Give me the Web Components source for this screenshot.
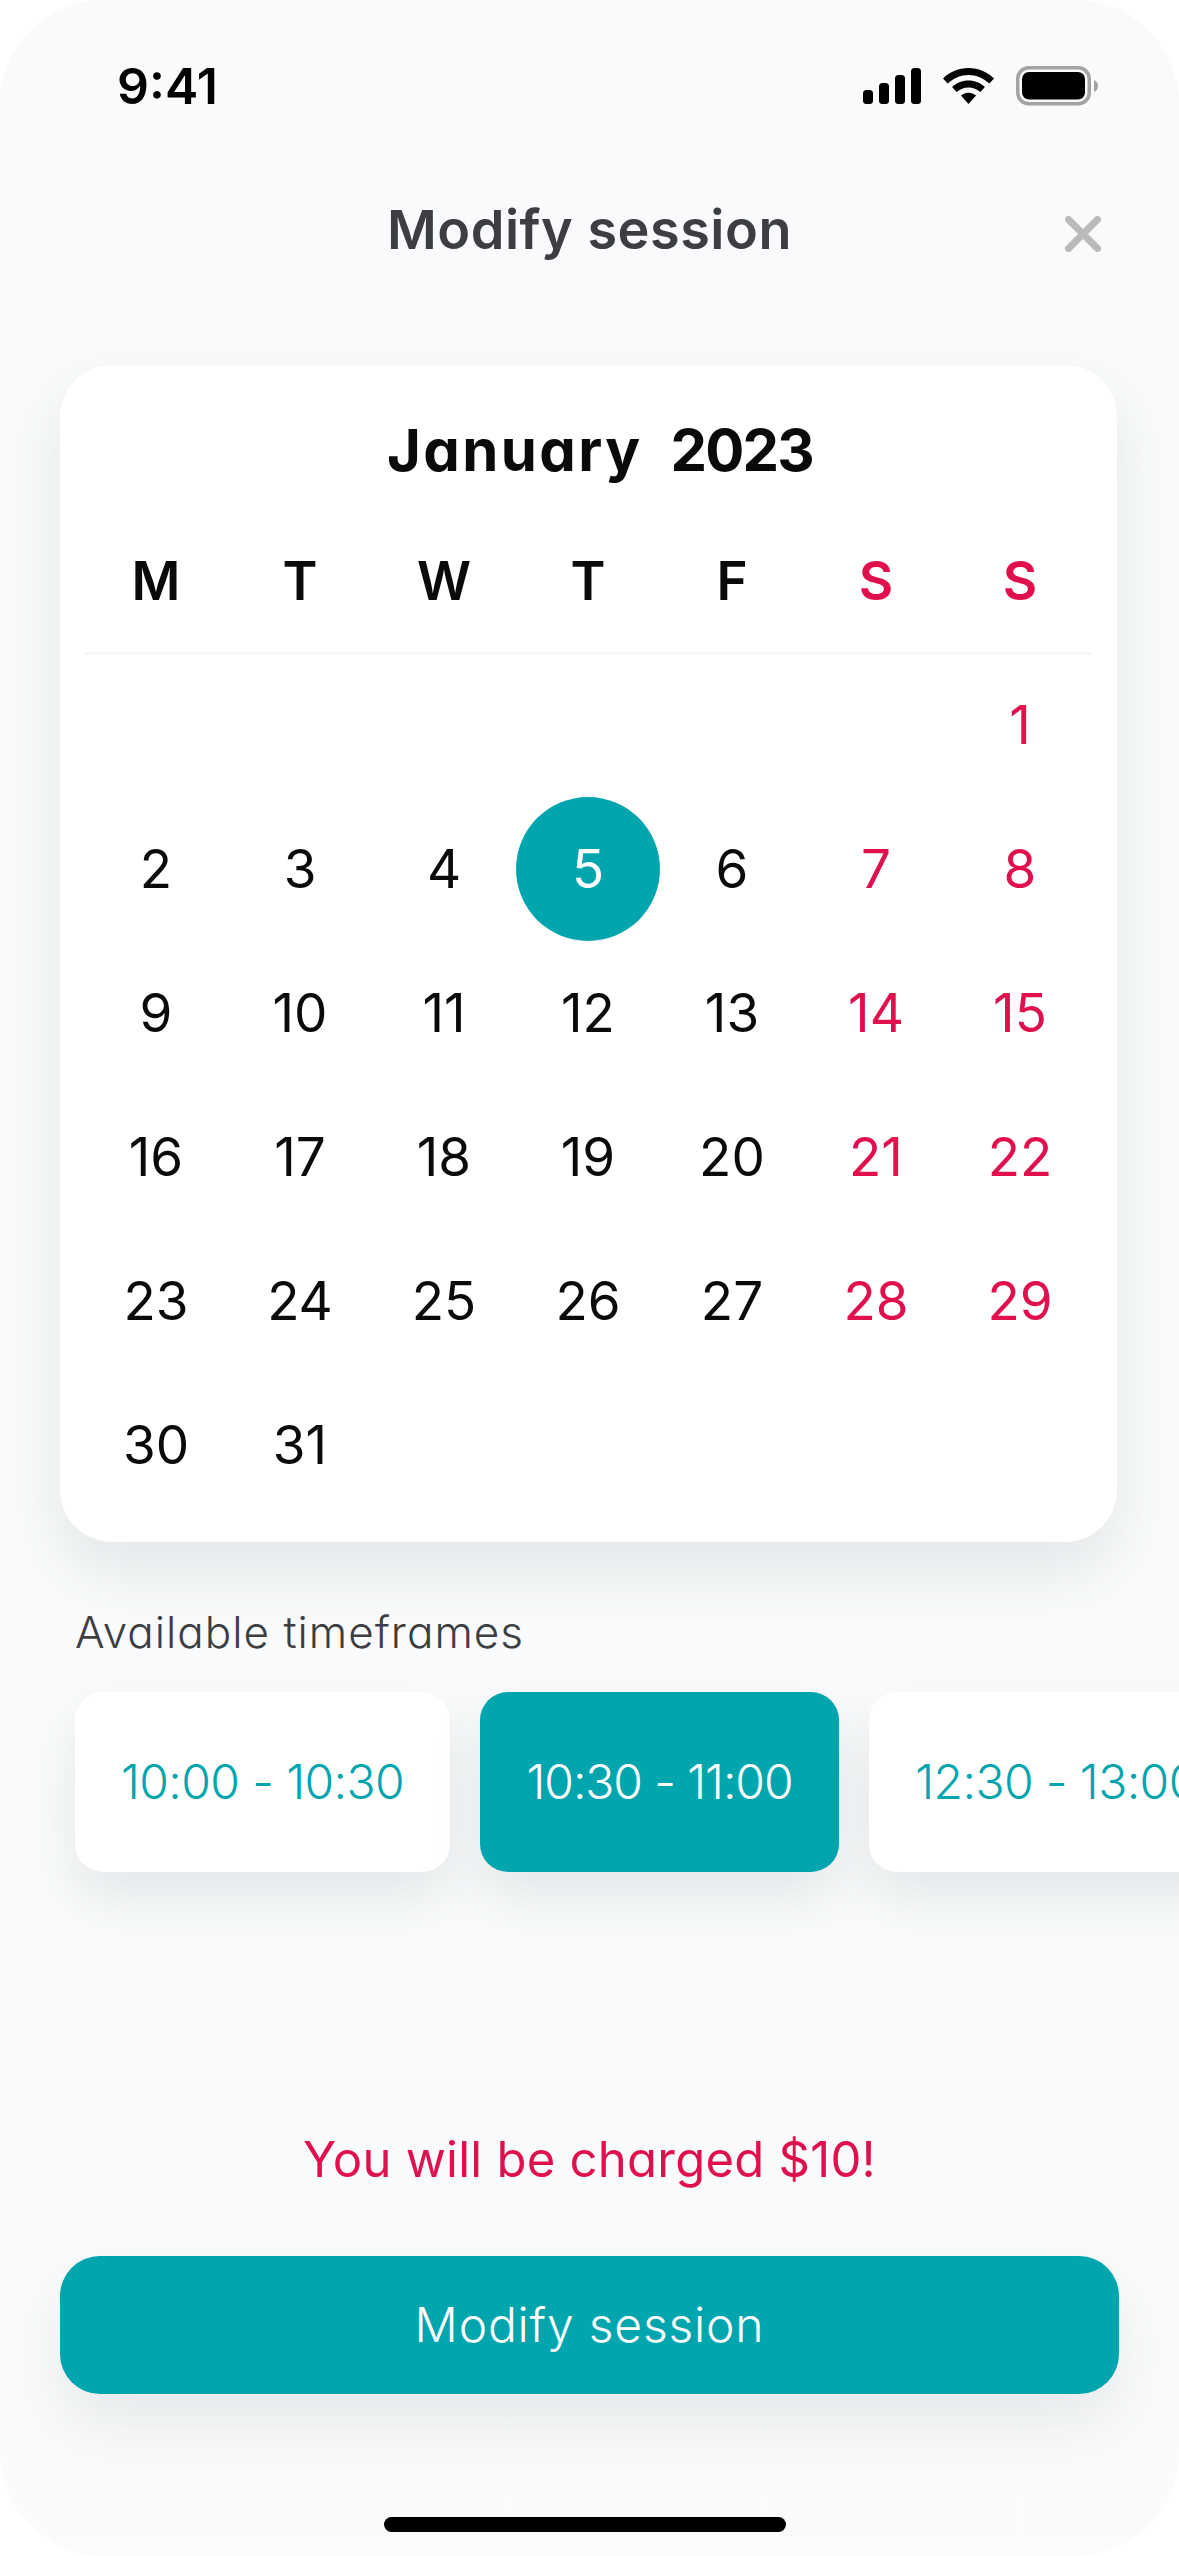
<!DOCTYPE html>
<html lang="en">
<head>
<meta charset="utf-8">
<title>Modify session</title>
<style>
    html, body { margin: 0; background: #fff; }
    body { font-family: "Inter", "Noto Sans", sans-serif; font-feature-settings: "cv11" 1; }
</style>
</head>
<body>
<app-screen>
    <status-bar></status-bar>
    <sheet-header>Modify session</sheet-header>
    <month-calendar month="January" year="2023" first="7" days="31" selected="5"></month-calendar>
    <time-picker label="Available timeframes">
        <time-chip>10:00 - 10:30</time-chip>
        <time-chip selected>10:30 - 11:00</time-chip>
        <time-chip>12:30 - 13:00</time-chip>
    </time-picker>
    <charge-note>You will be charged $10!</charge-note>
    <primary-button>Modify session</primary-button>
    <home-bar></home-bar>
</app-screen>

<script>
// Screen frame
class AppScreen extends HTMLElement {
    constructor() {
        super();
        this.attachShadow({ mode: 'open' });
        this.shadowRoot.innerHTML = `
            <style>
                :host {
                    display: flex;
                    flex-direction: column;
                    width: 1179px;
                    height: 2556px;
                    background: linear-gradient(#f8fafb, #fafbfc);
                    border-radius: 104px;
                    overflow: hidden;
                    --teal: #00a5ad;
                    --red: #e0104d;
                    --ink: #0a0a0a;
                    --slate: #3c3e42;
                }
            </style>
            <slot></slot>
        `;
    }
}
customElements.define('app-screen', AppScreen);

// Status bar
class StatusBar extends HTMLElement {
    constructor() {
        super();
        this.attachShadow({ mode: 'open' });
        this.shadowRoot.innerHTML = `
            <style>
                :host {
                    display: flex;
                    justify-content: space-between;
                    align-items: center;
                    height: 56px;
                    padding: 58px 81px 0 117px;
                }
                .time { font: 600 50px/56px "Inter", sans-serif; color: #000; }
                .icons { display: flex; align-items: center; gap: 22px; }
                svg { display: block; }
            </style>
            <span class="time">9:41</span>
            <div class="icons">
                <svg width="58" height="36" viewBox="0 0 58 36" fill="#000">
                    <rect x="0" y="22" width="10" height="14" rx="3.5"/>
                    <rect x="16" y="15" width="10" height="21" rx="3.5"/>
                    <rect x="32" y="7" width="10" height="29" rx="3.5"/>
                    <rect x="48" y="0" width="10" height="36" rx="3.5"/>
                </svg>
                <svg width="51" height="36" viewBox="0 0 51 36" fill="#000">
                    <path d="M25.5 0C15.6 0 7 3.9 0 10.4L4.6 15.6C10.5 10.2 17.6 7 25.5 7S40.5 10.2 46.4 15.6L51 10.4C44 3.9 35.4 0 25.5 0Z"/>
                    <path d="M25.5 12.6C19.2 12.6 13.6 15 9.1 19L13.6 24.1C16.9 21.2 21 19.5 25.5 19.5S34.1 21.2 37.4 24.1L41.9 19C37.4 15 31.8 12.6 25.5 12.6Z"/>
                    <path d="M25.5 24.8C22.6 24.8 20 25.9 17.9 27.6L25.5 36L33.1 27.6C31 25.9 28.4 24.8 25.5 24.8Z"/>
                </svg>
                <svg width="82" height="40" viewBox="0 0 82 40">
                    <rect x="1.75" y="1.75" width="71.5" height="36" rx="11" fill="none" stroke="#a3a3a3" stroke-width="3.5"/>
                    <rect x="6" y="6" width="63" height="27.5" rx="7" fill="#000"/>
                    <path d="M78 14C80.5 15 82 17 82 20S80.5 25 78 26Z" fill="#a3a3a3"/>
                </svg>
            </div>
        `;
    }
}
customElements.define('status-bar', StatusBar);

// Header with centred title and close
class SheetHeader extends HTMLElement {
    constructor() {
        super();
        this.attachShadow({ mode: 'open' });
        this.shadowRoot.innerHTML = `
            <style>
                :host {
                    display: grid;
                    grid-template-columns: 1fr auto 1fr;
                    align-items: center;
                    margin-top: 76px;
                    padding: 0 78px;
                    height: 80px;
                    font: 600 54px/80px "Inter", sans-serif;
                    font-feature-settings: "cv11" 1;
                    letter-spacing: .5px;
                    color: var(--slate);
                }
                .title { grid-column: 2; }
                svg { justify-self: end; display: block; margin-top: 8px; }
            </style>
            <span class="title"><slot></slot></span>
            <svg width="36" height="36" viewBox="0 0 36 36" fill="none" stroke="#b9bbb9" stroke-width="7" stroke-linecap="round">
                <path d="M3.5 3.5L32.5 32.5M32.5 3.5L3.5 32.5"/>
            </svg>
        `;
    }
}
customElements.define('sheet-header', SheetHeader);

// Calendar card, built from attributes
class MonthCalendar extends HTMLElement {
    constructor() {
        super();
        this.attachShadow({ mode: 'open' });
    }

    connectedCallback() {
        const first = Number(this.getAttribute('first'));
        const days = Number(this.getAttribute('days'));
        const selected = Number(this.getAttribute('selected'));
        const weekdays = ['M', 'T', 'W', 'T', 'F', 'S', 'S'];

        const heads = weekdays.map((d, i) => `<span class="head ${i > 4 ? 'weekend' : ''}">${d}</span>`).join('');
        let cells = '<span class="cell"></span>'.repeat(first - 1);
        for (let d = 1; d <= days; d++) {
            const col = (first - 1 + d - 1) % 7;
            const cls = [col > 4 ? 'weekend' : '', d === selected ? 'selected' : ''].join(' ');
            cells += `<span class="cell ${cls}"><b>${d}</b></span>`;
        }

        this.shadowRoot.innerHTML = `
            <style>
                :host {
                    display: block;
                    box-sizing: border-box;
                    width: 1057px;
                    height: 1177px;
                    margin: 95px 0 0 60px;
                    padding: 0 25px 0 24px;
                    background: #fff;
                    border-radius: 52px;
                    box-shadow: 0 30px 60px rgba(60, 75, 85, .11);
                    color: var(--ink);
                    font-family: "Inter", sans-serif;
                    font-feature-settings: "cv11" 1;
                }
                .title {
                    display: flex;
                    justify-content: center;
                    gap: 28px;
                    height: 144px;
                    padding: 50px 0 0 24px;
                    box-sizing: border-box;
                    font-weight: 650;
                    font-size: 58px;
                    line-height: 70px;
                }
                .month { letter-spacing: 2.4px; }
                .year { letter-spacing: -1.8px; }
                .heads, .grid { display: grid; grid-template-columns: repeat(7, 144px); }
                .heads { height: 146px; border-bottom: 3px solid #f6f7f8; box-sizing: border-box; }
                .grid { margin-top: -2px; }
                .head {
                    text-align: center;
                    font-weight: 600;
                    font-size: 53px;
                    line-height: 144px;
                }
                .cell {
                    display: flex;
                    align-items: center;
                    justify-content: center;
                    height: 144px;
                    font-size: 53px;
                    font-weight: 375;
                }
                .cell b { font-weight: inherit; }
                .weekend { color: var(--red); }
                .selected { background: var(--teal); color: #fff; border-radius: 50%; }
            </style>
            <div class="title"><span class="month">${this.getAttribute('month')}</span><span class="year">${this.getAttribute('year')}</span></div>
            <div class="heads">${heads}</div>
            <div class="grid">${cells}</div>
        `;
    }
}
customElements.define('month-calendar', MonthCalendar);

// Label + row of chips
class TimePicker extends HTMLElement {
    constructor() {
        super();
        this.attachShadow({ mode: 'open' });
        this.shadowRoot.innerHTML = `
            <style>
                :host { display: block; margin: 65px 0 0 75px; }
                .label {
                    font: 350 44px/50px "Inter", sans-serif;
                    font-feature-settings: "cv11" 1;
                    letter-spacing: 1px;
                    color: var(--slate);
                    margin-bottom: 35px;
                }
                .row { display: flex; gap: 30px; width: 1200px; }
            </style>
            <div class="label">${this.getAttribute('label')}</div>
            <div class="row"><slot></slot></div>
        `;
    }
}
customElements.define('time-picker', TimePicker);

class TimeChip extends HTMLElement {
    constructor() {
        super();
        this.attachShadow({ mode: 'open' });
        this.shadowRoot.innerHTML = `
            <style>
                :host {
                    display: flex;
                    align-items: center;
                    justify-content: center;
                    flex: none;
                    width: 375px;
                    height: 180px;
                    background: #fff;
                    color: var(--teal);
                    border-radius: 28px;
                    box-shadow: 0 26px 52px rgba(60, 75, 85, .11);
                    font: 350 48px/60px "Inter", sans-serif;
                    letter-spacing: -.6px;
                    white-space: nowrap;
                }
                :host([selected]) { background: var(--teal); color: #fff; width: 359px; letter-spacing: -1.1px; }
            </style>
            <slot></slot>
        `;
    }
}
customElements.define('time-chip', TimeChip);

class ChargeNote extends HTMLElement {
    constructor() {
        super();
        this.attachShadow({ mode: 'open' });
        this.shadowRoot.innerHTML = `
            <style>
                :host {
                    display: block;
                    margin-top: 258px;
                    text-align: center;
                    color: var(--red);
                    font: 400 49px/60px "Inter", sans-serif;
                    font-feature-settings: "cv11" 1;
                    letter-spacing: .25px;
                }
            </style>
            <slot></slot>
        `;
    }
}
customElements.define('charge-note', ChargeNote);

class PrimaryButton extends HTMLElement {
    constructor() {
        super();
        this.attachShadow({ mode: 'open' });
        this.shadowRoot.innerHTML = `
            <style>
                :host {
                    display: flex;
                    align-items: center;
                    justify-content: center;
                    width: 1059px;
                    height: 138px;
                    margin: 66px 0 0 60px;
                    background: var(--teal);
                    color: #fff;
                    border-radius: 40px;
                    box-shadow: 0 30px 60px rgba(60, 75, 85, .1);
                    font: 350 48px/60px "Inter", sans-serif;
                    font-feature-settings: "cv11" 1;
                    letter-spacing: .8px;
                }
            </style>
            <slot></slot>
        `;
    }
}
customElements.define('primary-button', PrimaryButton);

class HomeBar extends HTMLElement {
    constructor() {
        super();
        this.attachShadow({ mode: 'open' });
        this.shadowRoot.innerHTML = `
            <style>
                :host {
                    display: block;
                    width: 402px;
                    height: 15px;
                    margin: 123px 0 0 384px;
                    background: #000;
                    border-radius: 8px;
                }
            </style>
        `;
    }
}
customElements.define('home-bar', HomeBar);
</script>
</body>
</html>
